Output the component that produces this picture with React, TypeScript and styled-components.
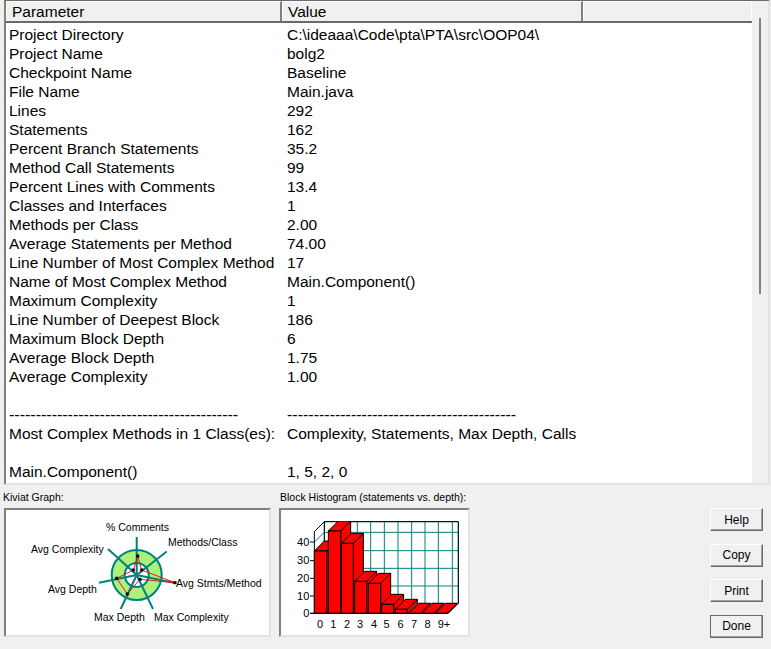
import React from "react";
import styled, { createGlobalStyle } from "styled-components";

const Global = createGlobalStyle`
  html, body { margin: 0; padding: 0; background: #f0f0f0; }
  * { box-sizing: border-box; }
`;

const Page = styled.div`
  width: 771px;
  height: 649px;
  overflow: hidden;
  background: #f0f0f0;
  font-family: "Liberation Sans", Arial, sans-serif;
  color: #000;
  display: flex;
  flex-direction: column;
  padding-left: 3px;
`;

const ListFrame = styled.div`
  width: 766px;
  height: 485px;
  margin-left: 1px;
  flex: none;
  display: flex;
  border-top: 1px solid #696969;
  border-left: 2px solid #808080;
  border-right: 2px solid #e3e3e3;
  border-bottom: 2px solid #e3e3e3;
`;

const ListMain = styled.div`
  width: 746px;
  background: #fff;
  overflow: hidden;
  flex: none;
`;

const Scroller = styled.div`
  flex: 1;
  background: #f0f0f0;
  padding: 17px 0 0 7px;
`;

const ScrollMark = styled.div`
  width: 2px;
  height: 276px;
  background: #808080;
`;

const HeaderRow = styled.div`
  display: flex;
  height: 22px;
  border-bottom: 2px solid #696969;
`;

const HeaderCell = styled.div<{ $w: number; $last?: boolean }>`
  width: ${(p) => p.$w}px;
  flex: none;
  height: 100%;
  padding-left: 5px;
  font-size: 15.5px;
  line-height: 20px;
  background: #f0f0f0;
  border-left: 1px solid #fff;
  border-top: 1px solid #fff;
  border-right: ${(p) => (p.$last ? "1px solid #fff" : "2px solid #808080")};
`;

const Rows = styled.div`
  padding-top: 2px;
`;

const Row = styled.div`
  display: grid;
  grid-template-columns: 278px 1fr;
  height: 19px;
  line-height: 19px;
  font-size: 15.5px;
  white-space: pre;
  padding-left: 3px;
`;

const Rule = styled.span`
  font-size: 16px;
`;

const Bottom = styled.div`
  flex: 1;
  display: flex;
  padding-top: 5px;
`;

const GraphBlock = styled.div<{ $w: number }>`
  width: ${(p) => p.$w}px;
  flex: none;
`;

const GraphLabel = styled.div<{ $inset: number }>`
  font-size: 10.5px;
  height: 18px;
  line-height: 14px;
  white-space: nowrap;
  padding-left: ${(p) => p.$inset}px;
`;

const GraphBox = styled.div<{ $w: number; $inset: number }>`
  width: ${(p) => p.$w}px;
  margin-left: ${(p) => p.$inset}px;
  height: 129px;
  background: #fff;
  border-top: 2px solid #808080;
  border-left: 2px solid #808080;
  border-right: 2px solid #e3e3e3;
  border-bottom: 2px solid #e3e3e3;
  overflow: hidden;

  svg { display: block; width: 100%; height: 100%; }
`;

const Buttons = styled.div`
  margin-left: 240px;
  padding-top: 18px;
  display: flex;
  flex-direction: column;
  gap: 12.6px;
`;

const Btn = styled.button<{ $def?: boolean }>`
  width: 53px;
  height: 23px;
  padding: 0;
  font: 12px "Liberation Sans", Arial, sans-serif;
  color: #000;
  background: #f0f0f0;
  border: 1px solid #696969;
  border-top-color: ${(p) => (p.$def ? "#696969" : "#fff")};
  border-left-color: ${(p) => (p.$def ? "#696969" : "#fff")};
  box-shadow: inset -1px -1px 0 #a0a0a0;
`;

const dash = "-".repeat(43);

const data: [string, string][] = [
  ["Project Directory", "C:\\ideaaa\\Code\\pta\\PTA\\src\\OOP04\\"],
  ["Project Name", "bolg2"],
  ["Checkpoint Name", "Baseline"],
  ["File Name", "Main.java"],
  ["Lines", "292"],
  ["Statements", "162"],
  ["Percent Branch Statements", "35.2"],
  ["Method Call Statements", "99"],
  ["Percent Lines with Comments", "13.4"],
  ["Classes and Interfaces", "1"],
  ["Methods per Class", "2.00"],
  ["Average Statements per Method", "74.00"],
  ["Line Number of Most Complex Method", "17"],
  ["Name of Most Complex Method", "Main.Component()"],
  ["Maximum Complexity", "1"],
  ["Line Number of Deepest Block", "186"],
  ["Maximum Block Depth", "6"],
  ["Average Block Depth", "1.75"],
  ["Average Complexity", "1.00"],
  ["", ""],
  [dash, dash],
  ["Most Complex Methods in 1 Class(es):", "Complexity, Statements, Max Depth, Calls"],
  ["", ""],
  ["Main.Component()", "1, 5, 2, 0"],
];

const Kiviat = () => {
  const cx = 136.7;
  const cy = 575;
  const spokes = [
    [136.7, 537],
    [166.7, 551.5],
    [175, 583],
    [153, 609],
    [120.7, 609],
    [99, 582.7],
    [108, 549],
  ];
  const poly: [number, number][] = [
    [137.7, 556],
    [141.7, 570],
    [175, 582.7],
    [140, 579.3],
    [127.3, 594],
    [116.7, 578.3],
    [133.3, 570],
  ];
  const labels: [string, number, number][] = [
    ["% Comments", 106, 531],
    ["Methods/Class", 168, 546],
    ["Avg Stmts/Method", 176, 587],
    ["Max Complexity", 154, 621],
    ["Max Depth", 94, 621],
    ["Avg Depth", 48, 593],
    ["Avg Complexity", 31, 553],
  ];
  return (
    <svg viewBox="6 510 263 125">
      <circle cx={cx} cy={cy} r={25} fill="#aaf27a" stroke="#008080" strokeWidth={2} />
      <circle cx={cx} cy={cy} r={12} fill="#fff" stroke="#008080" strokeWidth={2} />
      {spokes.map(([x, y], i) => (
        <line key={i} x1={cx} y1={cy} x2={x} y2={y} stroke="#008080" strokeWidth={2} />
      ))}
      <polygon points={poly.map((p) => p.join(",")).join(" ")} fill="none" stroke="#f00" strokeWidth={0.9} />
      {poly.map(([x, y], i) => (
        <rect key={i} x={x - 1.5} y={y - 1.5} width={3} height={3} fill="#000" />
      ))}
      {labels.map(([t, x, y]) => (
        <text key={t} x={x} y={y} fontFamily="'Liberation Sans', Arial, sans-serif" fontSize={10.5} fill="#000">
          {t}
        </text>
      ))}
    </svg>
  );
};

const Histogram = () => {
  const bars: [number, number, number][] = [
    [133, 37, 213],
    [175, 37, 153],
    [214, 36, 190],
    [254, 36, 304],
    [295, 37, 310],
    [335, 36, 373],
    [376, 36, 388],
    [416, 36, 400],
    [456, 36, 400],
    [496, 36, 400],
  ];
  const d = 30;
  const vx = [163, 221, 262, 302, 343, 384, 425, 465, 505, 547, 565];
  const hy = [125, 157, 212, 265, 318, 370];
  const xl = ["0", "1", "2", "3", "4", "5", "6", "7", "8", "9+"];
  const xp = [150, 190, 231, 270, 312, 350, 392, 432, 473, 522];
  const yl: [string, number][] = [["40", 186], ["30", 242], ["20", 295], ["10", 348], ["0", 400]];
  return (
    <svg viewBox="33 90 561 375">
      <defs>
        <clipPath id="plot">
          <rect x="100" y="123" width="480" height="290" />
        </clipPath>
      </defs>
      {vx.map((x) => (
        <line key={x} x1={x} y1={125} x2={x} y2={370} stroke="#008080" strokeWidth={3} />
      ))}
      {hy.map((y) => (
        <line key={y} x1={163} y1={y} x2={565} y2={y} stroke="#008080" strokeWidth={3} />
      ))}
      <line x1={163} y1={125} x2={565} y2={125} stroke="#000" strokeWidth={3} />
      <line x1={565} y1={125} x2={565} y2={370} stroke="#000" strokeWidth={3} />
      <line x1={163} y1={125} x2={163} y2={370} stroke="#000" strokeWidth={3} />
      <line x1={133} y1={186} x2={163} y2={157} stroke="#008080" strokeWidth={3} />
      <polygon points="133,400 535,400 565,370 163,370" fill="#fff" />
      <line x1={133} y1={155} x2={163} y2={125} stroke="#000" strokeWidth={3} />
      <line x1={133} y1={155} x2={133} y2={400} stroke="#000" strokeWidth={3} />
      <line x1={535} y1={400} x2={565} y2={370} stroke="#000" strokeWidth={3} />
      <g clipPath="url(#plot)" stroke="#000" strokeWidth={3} fill="#f00">
        {bars.map(([x, w, t], i) => (
          <g key={i}>
            <polygon points={`${x + w},${t} ${x + w + d},${t - d} ${x + w + d},${400 - d} ${x + w},400`} />
            <polygon points={`${x},${t} ${x + d},${t - d} ${x + w + d},${t - d} ${x + w},${t}`} />
            <rect x={x} y={t} width={w} height={400 - t} />
          </g>
        ))}
      </g>
      <line x1={120} y1={400} x2={535} y2={400} stroke="#000" strokeWidth={3} />
      {yl.map(([t, y]) => (
        <g key={t}>
          <line x1={120} y1={y} x2={133} y2={y} stroke="#000" strokeWidth={3} />
          <text x={118} y={y + 11} textAnchor="end" fontFamily="'Liberation Sans', Arial, sans-serif" fontSize={33} fill="#000">
            {t}
          </text>
        </g>
      ))}
      {xl.map((t, i) => (
        <text key={t} x={xp[i]} y={445} textAnchor="middle" fontFamily="'Liberation Sans', Arial, sans-serif" fontSize={33} fill="#000">
          {t}
        </text>
      ))}
    </svg>
  );
};

export default function App() {
  return (
    <Page>
      <Global />
      <ListFrame>
        <ListMain>
          <HeaderRow>
            <HeaderCell $w={276}>Parameter</HeaderCell>
            <HeaderCell $w={301}>Value</HeaderCell>
            <HeaderCell $w={169} $last />
          </HeaderRow>
          <Rows>
            {data.map(([a, b], i) => (
              <Row key={i}>
                {a === dash ? <Rule>{a}</Rule> : <span>{a}</span>}
                {b === dash ? <Rule>{b}</Rule> : <span>{b}</span>}
              </Row>
            ))}
          </Rows>
        </ListMain>
        <Scroller>
          <ScrollMark />
        </Scroller>
      </ListFrame>
      <Bottom>
        <GraphBlock $w={276}>
          <GraphLabel $inset={0}>Kiviat Graph:</GraphLabel>
          <GraphBox $w={267} $inset={1}>
            <Kiviat />
          </GraphBox>
        </GraphBlock>
        <GraphBlock $w={191}>
          <GraphLabel $inset={1}>Block Histogram (statements vs. depth):</GraphLabel>
          <GraphBox $w={191} $inset={0}>
            <Histogram />
          </GraphBox>
        </GraphBlock>
        <Buttons>
          <Btn>Help</Btn>
          <Btn>Copy</Btn>
          <Btn>Print</Btn>
          <Btn $def>Done</Btn>
        </Buttons>
      </Bottom>
    </Page>
  );
}
